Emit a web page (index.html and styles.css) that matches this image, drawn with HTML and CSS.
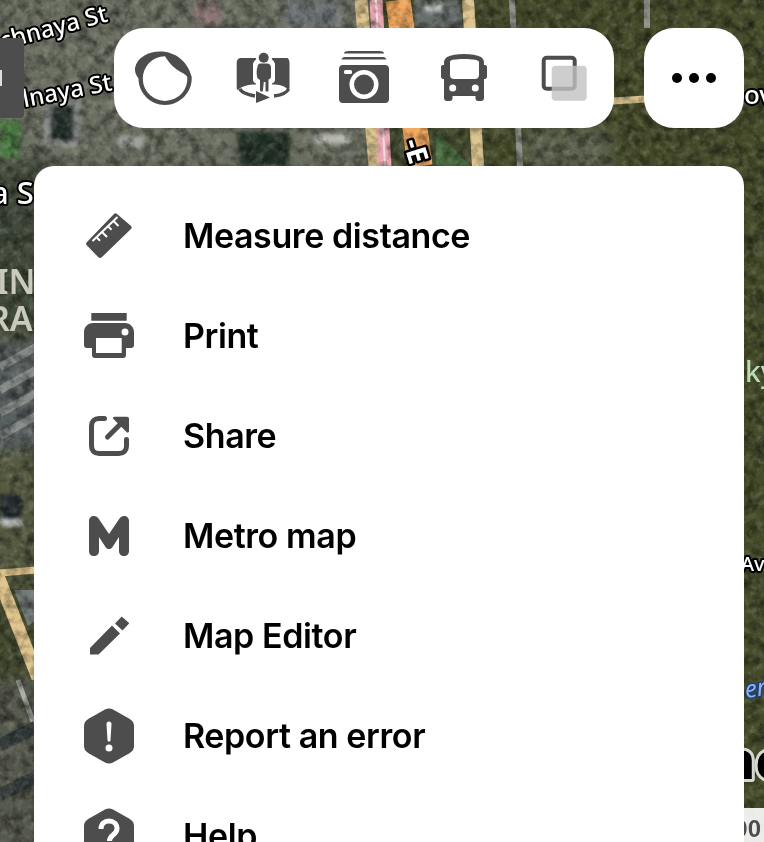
FILE: index.html
```html
<!DOCTYPE html>
<html lang="en">
<head>
<meta charset="utf-8">
<title>Map menu</title>
<link rel="stylesheet" href="styles.css">
</head>
<body>
<div class="screen">
  <svg class="map" viewBox="0 0 764 842" width="764" height="842" aria-hidden="true">
    <defs>
      <filter id="tex" x="0" y="0" width="100%" height="100%">
        <feTurbulence type="fractalNoise" baseFrequency="0.09" numOctaves="4" seed="7"/>
        <feColorMatrix type="matrix" values="0 0 0 0 0  0 0 0 0 0  0 0 0 0 0  1.8 0 0 0 -0.7"/>
      </filter>
      <filter id="tex2" x="0" y="0" width="100%" height="100%">
        <feTurbulence type="fractalNoise" baseFrequency="0.14" numOctaves="3" seed="21"/>
        <feColorMatrix type="matrix" values="0 0 0 0 0.75  0 0 0 0 0.75  0 0 0 0 0.55  0 1.8 0 0 -0.8"/>
      </filter>
      <filter id="wide" x="-10%" y="-10%" width="120%" height="120%"><feGaussianBlur stdDeviation="7"/></filter>
      <filter id="mid" x="-10%" y="-10%" width="120%" height="120%"><feGaussianBlur stdDeviation="2.2"/></filter>
      <filter id="soft"><feGaussianBlur stdDeviation="0.6"/></filter>
    </defs>
    <rect width="764" height="842" fill="#444b30"/>
    <g filter="url(#wide)">
      <rect x="-20" y="-20" width="390" height="190" fill="#6c7064"/>
      <rect x="-20" y="160" width="70" height="170" fill="#414a3a"/>
      <rect x="-20" y="340" width="60" height="110" fill="#595e60"/>
      <rect x="-20" y="450" width="60" height="130" fill="#555a40"/>
      <rect x="-20" y="680" width="60" height="180" fill="#55594e"/>
      <rect x="480" y="-20" width="300" height="880" fill="#454c2a"/>
      <rect x="525" y="130" width="85" height="36" fill="#5d6450"/>
    </g>
    <g filter="url(#mid)">
      <rect x="238" y="132" width="52" height="34" fill="#26352a"/>
      <rect x="0" y="120" width="20" height="38" fill="#47773f"/>
      <rect x="118" y="136" width="26" height="12" fill="#a0a39e"/>
      <rect x="315" y="134" width="34" height="10" fill="#b5b7b0"/>
      <rect x="285" y="0" width="56" height="26" fill="#6d7374"/>
      <rect x="415" y="0" width="46" height="28" fill="#656c6a"/>
      <rect x="425" y="4" width="16" height="7" fill="#cfd2cd"/>
      <rect x="195" y="2" width="26" height="22" fill="#8b7674"/>
      <rect x="44" y="100" width="36" height="46" fill="#8c918e"/>
      <rect x="50" y="105" width="24" height="36" fill="#27332f"/>
      <rect x="0" y="495" width="22" height="28" fill="#262d33"/>
      <rect x="0" y="520" width="22" height="6" fill="#cfd3d2"/>
    </g>
    <g filter="url(#soft)">
      <path d="M0 367l36-20M0 390l36-20M0 413l36-20M0 436l36-20" stroke="#858a88" stroke-width="8" fill="none"/>
      <path d="M361 0l14 166" stroke="#dcc48e" stroke-width="13"/>
      <path d="M376 0l9 166" stroke="#e8a6b3" stroke-width="13"/>
      <path d="M376 0l9 166" stroke="#fff" stroke-width="2" opacity=".6"/>
      <path d="M398 0l22 166" stroke="#f2a75c" stroke-width="25"/>
      <path d="M436 130l34 36h-34z" fill="#4a7a45" opacity=".6"/>
      <path d="M468 0l10 166" stroke="#dcc48e" stroke-width="12"/>
      <path d="M512 0l8 166" stroke="#8f928c" stroke-width="6"/>
      <path d="M647 0v28" stroke="#8f928c" stroke-width="6"/>
      <path d="M612 101l34-2" stroke="#dcc48e" stroke-width="7"/>
      <path d="M0 573l36-3" stroke="#e0c48c" stroke-width="7"/>
      <path d="M-2 576l40 102" stroke="#e0c48c" stroke-width="13"/>
      <path d="M14 590h22v30l-8 6z" fill="#737a78"/>
      <path d="M18 680l18 50" stroke="#a8aca6" stroke-width="5"/>
      <path d="M0 745l36-18M0 795l36-18" stroke="#363c3c" stroke-width="13"/>
    </g>
    <rect width="764" height="842" filter="url(#tex)" opacity=".6"/>
    <rect width="764" height="842" filter="url(#tex2)" opacity=".25"/>
    <g class="lbl">
      <text class="lbl-end" transform="translate(109 21) rotate(-15)">chnaya St</text>
      <text class="lbl-end" transform="translate(113 90) rotate(-11)">Dolnaya St</text>
      <text x="-9" y="204" class="lbl-lg">a S</text>
      <text transform="translate(403 142) rotate(73)" class="lbl-road">-E</text>
      <text x="744" y="104" class="lbl-ov">ov</text>
      <text x="741" y="571" class="lbl-sm">Av</text>
    </g>
    <text x="-4" y="294" class="lbl-district">IN</text>
    <text x="-12" y="331" class="lbl-district">RA</text>
    <text x="745" y="382" class="lbl-park">ky</text>
    <text transform="translate(746 698) rotate(-8)" class="lbl-water">en</text>
    <text x="721" y="779" class="lbl-big">nc</text>
  </svg>

  <div class="side-stub"></div>

  <div class="corner"><span>00</span></div>

  <nav class="toolbar-row">
    <div class="toolbar">
      <button class="tool" aria-label="Panorama layer">
        <svg viewBox="0 0 60 60" width="60" height="60"><path class="ico" d="M1 20C3 9 15 3.500 26 3.500 42 3.500 54 14 57.700 29 58.500 44 46 57 31 57 16.500 57 4.500 45 4.500 30.500 2 27 .5 24 1 20z"/><path d="M31 8.300C36 16 39 19 44.300 22.500 47.500 24.500 51 26 53.300 28.700A22.300 22.300 0 1 1 31 8.300z" fill="#fff"/></svg>
      </button>
      <button class="tool" aria-label="Street view">
        <svg viewBox="0 0 60 60" width="60" height="60"><circle cx="29.700" cy="9.700" r="5" class="ico"/><path class="ico" d="M23.500 19c0-2 1-3.500 3-3.500h6c3 0 4.500 1.500 4.500 4v9c0 1.500-1 2.500-2.500 3V42c0 1-.5 1.500-1.500 1.500S31.500 43 31.500 42v-8h-1.700L29 42c0 1-.5 1.500-1.500 1.500S26 43 26 42V32c-1.500-1-3-2-3-3.500-.5-3-.5-7 .5-9.500z"/><path class="ico" d="M7 10h14c1 0 1.500.7 1 1.500-2 1.500-3 3-3 5.500v15c0 1.500 1 2.500 3 3.500v1c-8 0-15 2-18.500 5.500-.5-.5-.8-1-.8-2V14.500C2.700 12 4.500 10 7 10zM53.300 10H39c-1 0-1.500.7-1 1.500 2 1.500 3 3 3 5.500v15c0 1.500-1 2.500-3 3.500v1c8 0 15 2 15.500 5.500.5-.5 2-1 2-2V14.500c0-2.500-1.700-4.500-2.200-4.500z"/><path d="M6 40.500c.5 3.500 7 6 15 7.500M40 48c7-1 13-3 14.500-7" fill="none" stroke="#4d4d4d" stroke-width="3.500"/><path class="ico" d="M22 43l14 6.500-14 5.500z"/></svg>
      </button>
      <button class="tool" aria-label="Photos">
        <svg viewBox="0 0 60 60" width="60" height="60"><path class="ico" d="M15 3h30c3 0 5 .7 5 2.500H10C10 3.700 12 3 15 3zM11 9h38c2 0 3 1 3.500 2.500h-45C8 10 9 9 11 9zM9 17h42c2.500 0 4 1.500 4 4v30c0 2.500-1.500 4-4 4H9c-2.500 0-4-1.500-4-4V21c0-2.500 1.500-4 4-4z"/><rect x="10" y="22" width="8" height="4" rx="1.500" fill="#fff"/><circle cx="30" cy="36.500" r="14.500" fill="#fff"/><circle cx="30" cy="36.500" r="10" class="ico"/></svg>
      </button>
      <button class="tool" aria-label="Transit">
        <svg viewBox="0 0 60 60" width="60" height="60"><path class="ico" d="M13 9c4-2 10-3 17-3s13 1 17 3c2 1.500 3 3 3 6v2h1c1.500 0 2 1 2 2v9c0 1.500-.5 3-2 3h-1v19c0 2-1 3-3 3h-3c-1.500 0-2.500-1-2.500-3v-2H18.500v2c0 2-1 3-2.500 3h-3c-2 0-3-1-3-3V31H9c-1.500 0-2-1.500-2-3v-9c0-1 .5-2 2-2h1v-2c0-3 1-4.500 3-6z"/><path d="M16 14c0-1 1-2 3-2.300 3-.5 7-.7 11-.7s8 .2 11 .7c2 .3 4 1.300 4 2.300v13c0 2.500-1.500 4-4 4H20c-2.500 0-4-1.500-4-4z" fill="#fff"/><circle cx="18.700" cy="40" r="3.500" fill="#fff"/><circle cx="41.300" cy="40" r="3.500" fill="#fff"/></svg>
      </button>
      <button class="tool" aria-label="Layers">
        <svg viewBox="0 0 60 60" width="60" height="60"><rect x="9.700" y="9.700" width="31" height="31" rx="3" fill="none" stroke="#4d4d4d" stroke-width="4"/><rect x="17.700" y="17.700" width="35" height="35" rx="4" fill="#c2c2c2" fill-opacity=".8"/></svg>
      </button>
    </div>
    <button class="more" aria-label="More">
      <span class="dot"></span><span class="dot"></span><span class="dot"></span>
    </button>
  </nav>

  <ul class="menu">
    <li class="item">
      <svg class="item-ico" viewBox="0 0 50 50" width="50" height="50"><path class="ico" d="M33 3l13.500 11.500c1.500 1.300 1.500 2.500.2 3.700L18 46c-1.200 1.200-2.700 1.200-3.900 0L3 34.500c-1.200-1.200-1.200-2.400 0-3.500L30 3c1-1 2-1 3 0z"/><path d="M8.500 30L33.500 6M12.500 26.200l3.500 3.500M18 21l5 5M24 15.200l3.500 3.500M29.500 10l5 5" fill="none" stroke="#fff" stroke-width="2"/></svg>
      <span class="item-text">Measure distance</span>
    </li>
    <li class="item">
      <svg class="item-ico" viewBox="0 0 50 50" width="50" height="50"><path class="ico" fill-rule="evenodd" d="M7.300 2h35.400v7.700H7.300zM9 12h32c5 0 9 4 9 9v13c0 2-1 3-3 3h-5v7c0 2-1 3-3 3H11c-2 0-3-1-3-3v-7H3c-2 0-3-1-3-3V21c0-5 4-9 9-9zM12 27v15h25.700V27zM41 17.500a3.500 3.500 0 1 0 0 7 3.500 3.500 0 0 0 0-7z"/></svg>
      <span class="item-text">Print</span>
    </li>
    <li class="item">
      <svg class="item-ico" viewBox="0 0 50 50" width="50" height="50"><path d="M20.500 7.500H15c-4.500 0-7.500 3-7.500 7.500v20c0 4.500 3 7.500 7.500 7.500h20c4.500 0 7.500-3 7.500-7.500v-6.500" fill="none" stroke="#4d4d4d" stroke-width="5" stroke-linecap="round"/><path d="M23.500 26L38 11.500" fill="none" stroke="#4d4d4d" stroke-width="5" stroke-linecap="round"/><path class="ico" d="M30.500 5.700H43c1.200 0 2 .8 2 2V20c0 1.500-1.500 2-2.500 1L29.500 8c-1-1-.5-2.300 1-2.300z"/></svg>
      <span class="item-text">Share</span>
    </li>
    <li class="item">
      <svg class="item-ico" viewBox="0 0 50 50" width="50" height="50"><path class="ico" d="M10 5c2 0 3.500 1 4.500 2.500L25 23 35.500 7.500C36.500 6 38 5 40 5c3 0 5 2 5 5v30c0 3-2 5-5 5s-5-2-5-5V26l-6.500 10c-1 1.500-2 2-3.500 2s-2.500-.5-3.500-2L15 26v14c0 3-2 5-5 5s-5-2-5-5V10c0-3 2-5 5-5z"/></svg>
      <span class="item-text">Metro map</span>
    </li>
    <li class="item">
      <svg class="item-ico" viewBox="0 0 50 50" width="50" height="50"><path class="ico" d="M6 37L28 14.500l8 8L14.500 43.500H6zM31 12.500L37.700 5.500l7.600 6.800-6.800 7.200z"/></svg>
      <span class="item-text">Map Editor</span>
    </li>
    <li class="item">
      <svg class="item-ico" viewBox="0 0 50 56" width="50" height="56"><path class="ico" d="M21 1.500c2.500-1.300 5.500-1.300 8 0l16 9c3 1.700 5 4 5 7.500v20c0 3.500-2 5.800-5 7.500l-16 9c-2.500 1.300-5.500 1.300-8 0l-16-9c-3-1.700-5-4-5-7.500V18c0-3.500 2-5.800 5-7.500z"/><path d="M22.500 16c0-1.500 1-2.500 2.500-2.500s2.500 1 2.500 2.500l-1 16c0 1-.6 1.500-1.500 1.500s-1.500-.5-1.500-1.500z" fill="#fff"/><circle cx="25" cy="40" r="3.500" fill="#fff"/></svg>
      <span class="item-text">Report an error</span>
    </li>
    <li class="item">
      <svg class="item-ico" viewBox="0 0 50 56" width="50" height="56"><path class="ico" d="M21 1.500c2.500-1.300 5.500-1.300 8 0l16 9c3 1.700 5 4 5 7.500v20c0 3.500-2 5.800-5 7.500l-16 9c-2.500 1.300-5.500 1.300-8 0l-16-9c-3-1.700-5-4-5-7.500V18c0-3.500 2-5.800 5-7.500z"/><path d="M17 21c0-5 3.500-8 8-8s8 3 8 7.500c0 3-1.500 4.500-4 6.500-2 1.500-3.500 3-3.500 6" fill="none" stroke="#fff" stroke-width="5"/><circle cx="25" cy="41" r="3.500" fill="#fff"/></svg>
      <span class="item-text">Help</span>
    </li>
  </ul>
</div>
</body>
</html>
```

FILE: styles.css
```css
* {
  box-sizing: border-box;
}

html,
body {
  margin: 0;
  padding: 0;
  height: 100%;
  overflow: hidden;
}

.screen {
  position: relative;
  width: 764px;
  height: 842px;
  overflow: hidden;
  padding: 28px 20px 0 34px;
  font-family: "Inter", "Liberation Sans", sans-serif;
  color: #000;
}

.map {
  position: absolute;
  top: 0;
  left: 0;
  display: block;
}

.lbl text {
  font-family: "Noto Sans", sans-serif;
  font-size: 24px;
  font-weight: 500;
  fill: #fff;
  stroke: #000;
  stroke-width: 4px;
  paint-order: stroke;
  stroke-linejoin: round;
}

.lbl .lbl-end {
  text-anchor: end;
}

.lbl .lbl-lg {
  font-size: 31px;
}

.lbl .lbl-sm {
  font-size: 20px;
}

.lbl .lbl-ov {
  font-size: 26px;
}

.lbl .lbl-road {
  font-size: 28px;
  font-weight: 700;
  stroke-width: 5px;
}

.lbl-district {
  font-family: "Noto Sans", sans-serif;
  font-size: 34px;
  font-weight: 600;
  fill: #c9c9bd;
}

.lbl-park {
  font-family: "Noto Sans", sans-serif;
  font-size: 28px;
  font-weight: 500;
  fill: #b9dcb8;
}

.lbl-water {
  font-family: "Noto Sans", sans-serif;
  font-size: 24px;
  font-style: italic;
  fill: #8fb2ea;
  stroke: #1f3f77;
  stroke-width: 3px;
  paint-order: stroke;
}

.lbl-big {
  font-family: "Noto Sans", sans-serif;
  font-size: 52px;
  font-weight: 800;
  fill: #000;
  stroke: #d8d8d0;
  stroke-width: 6px;
  paint-order: stroke;
  stroke-linejoin: round;
}

.side-stub {
  position: absolute;
  left: 0;
  top: 38px;
  width: 24px;
  height: 80px;
  background: #4d4d4d;
  border-radius: 0 4px 4px 0;
}

.side-stub::after {
  content: "";
  position: absolute;
  left: 0;
  top: 32px;
  width: 2px;
  height: 16px;
  background: #ddd;
}

.corner {
  position: absolute;
  right: 0;
  bottom: 0;
  width: 20px;
  height: 34px;
  background: rgba(255, 255, 255, 0.9);
  overflow: hidden;
  font-family: "Liberation Sans", sans-serif;
  font-size: 24px;
  font-weight: 700;
  line-height: 42px;
  color: #4d4d4d;
  white-space: nowrap;
  direction: rtl;
  padding-right: 3px;
}

.toolbar-row {
  position: relative;
  display: flex;
  justify-content: flex-end;
  gap: 30px;
}

.toolbar {
  display: flex;
  width: 500px;
  height: 100px;
  background: #fff;
  border-radius: 30px;
}

.tool,
.more {
  border: 0;
  padding: 0;
  background: none;
  display: flex;
  align-items: center;
  justify-content: center;
}

.tool {
  width: 100px;
  height: 100px;
}

.tool svg {
  display: block;
}

.more {
  width: 100px;
  height: 100px;
  background: #fff;
  border-radius: 30px;
  gap: 7.3px;
}

.dot {
  width: 10px;
  height: 10px;
  border-radius: 50%;
  background: #000;
}

.ico {
  fill: #4d4d4d;
}

.menu {
  position: relative;
  list-style: none;
  margin: 38px 0 0;
  padding: 20px 0;
  background: #fff;
  border-radius: 20px;
}

.item {
  display: flex;
  align-items: center;
  height: 100px;
  font-size: 34px;
  font-weight: 600;
  letter-spacing: -0.4px;
}

.item-text {
  padding-bottom: 2px;
}

.item-ico {
  flex: none;
  margin: 0 49px 0 50px;
}
```
